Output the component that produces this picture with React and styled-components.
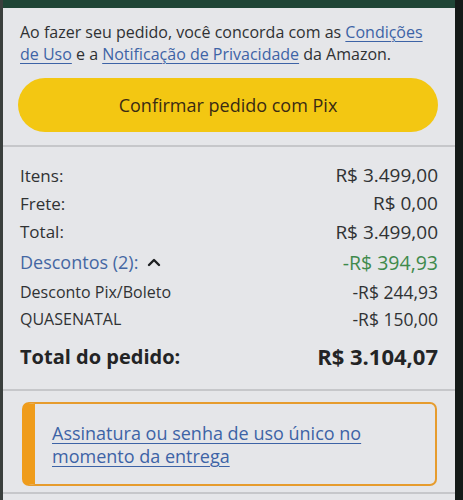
import React from "react";
import styled, { createGlobalStyle } from "styled-components";

const GlobalStyle = createGlobalStyle`
  html, body {
    margin: 0;
    padding: 0;
    background: #151c1a;
  }
  body {
    font-family: "Open Sans", "Liberation Sans", sans-serif;
    -webkit-font-smoothing: antialiased;
  }
`;

const Frame = styled.div`
  display: flex;
  width: 463px;
  height: 500px;
  overflow: hidden;
`;

const LeftBezel = styled.div`
  width: 3px;
  background: #3a3f3d;
`;

const RightBezel = styled.div`
  width: 8px;
  background: #141a18;
`;

const Screen = styled.div`
  flex: 1;
  display: flex;
  flex-direction: column;
  background: #e5e6e9;
`;

const TopBand = styled.div`
  height: 8px;
  background: #1f4536;
`;

const Notice = styled.p`
  margin: 0;
  padding: 13px 17px 0;
  font-size: 16px;
  line-height: 22px;
  color: #2f3133;
`;

const Link = styled.a`
  color: #3d63a6;
  text-decoration: underline;
  text-underline-offset: 3px;
  text-decoration-thickness: 1px;
`;

const ButtonWrap = styled.div`
  padding: 13px 17px 13px 15px;
`;

const PixButton = styled.button`
  width: 100%;
  height: 54px;
  border: none;
  border-radius: 27px;
  background: #f3c712;
  color: #3a2b12;
  font-family: inherit;
  font-size: 18px;
  cursor: pointer;
`;

const Divider = styled.div`
  height: 2px;
  background: #c6c7ca;
`;

const Summary = styled.div`
  display: flex;
  flex-direction: column;
  padding: 14px 17px 0;
`;

const Row = styled.div`
  display: flex;
  justify-content: space-between;
  align-items: center;
  height: ${(p) => p.$h || 28}px;
  font-size: ${(p) => p.$size || 17}px;
  color: #303234;
`;

const Label = styled.span`
  display: flex;
  align-items: center;
  gap: 9px;
  font-size: ${(p) => (p.$size ? `${p.$size}px` : "inherit")};
  color: ${(p) => p.$color || "inherit"};
`;

const Value = styled.span`
  font-size: ${(p) => p.$size || 19}px;
  color: ${(p) => p.$color || "inherit"};
`;

const TotalRow = styled.div`
  box-sizing: border-box;
  display: flex;
  justify-content: space-between;
  align-items: center;
  height: 58px;
  padding: 0 17px 8px;
  font-weight: 700;
  color: #232425;
`;

const TotalLabel = styled.span`
  font-size: 20px;
`;

const TotalValue = styled.span`
  font-size: 22px;
`;

const BoxWrap = styled.div`
  padding: 11px 18px 6px 19px;
`;

const DeliveryBox = styled.div`
  border: 2px solid #e69c2e;
  border-left: 13px solid #ef9c1b;
  border-radius: 7px;
  padding: 18px 20px 16px 17px;
  font-size: 18px;
  line-height: 23px;
`;

const Chevron = () => (
  <svg width="14" height="10" viewBox="0 0 14 10">
    <path d="M2 8 L7 3 L12 8" fill="none" stroke="#1d1f21" strokeWidth="2.4" strokeLinecap="round" strokeLinejoin="round" />
  </svg>
);

export default function App() {
  return (
    <Frame>
      <GlobalStyle />
      <LeftBezel />
      <Screen>
        <TopBand />
        <Notice>
          Ao fazer seu pedido, você concorda com as <Link href="#">Condições de Uso</Link> e a{" "}
          <Link href="#">Notificação de Privacidade</Link> da Amazon.
        </Notice>
        <ButtonWrap>
          <PixButton>Confirmar pedido com Pix</PixButton>
        </ButtonWrap>
        <Divider />
        <Summary>
          <Row>
            <Label>Itens:</Label>
            <Value>R$ 3.499,00</Value>
          </Row>
          <Row>
            <Label>Frete:</Label>
            <Value>R$ 0,00</Value>
          </Row>
          <Row $h={29}>
            <Label>Total:</Label>
            <Value>R$ 3.499,00</Value>
          </Row>
          <Row $h={32}>
            <Label $color="#4467a3" $size={18}>
              Descontos (2): <Chevron />
            </Label>
            <Value $color="#3f8a4c" $size={19.5}>-R$ 394,93</Value>
          </Row>
          <Row $h={28} $size={16}>
            <Label>Desconto Pix/Boleto</Label>
            <Value $size={17.5}>-R$ 244,93</Value>
          </Row>
          <Row $h={25} $size={16}>
            <Label>QUASENATAL</Label>
            <Value $size={17.5}>-R$ 150,00</Value>
          </Row>
        </Summary>
        <TotalRow>
          <TotalLabel>Total do pedido:</TotalLabel>
          <TotalValue>R$ 3.104,07</TotalValue>
        </TotalRow>
        <Divider />
        <BoxWrap>
          <DeliveryBox>
            <Link href="#">Assinatura ou senha de uso único no momento da entrega</Link>
          </DeliveryBox>
        </BoxWrap>
        <Divider />
      </Screen>
      <RightBezel />
    </Frame>
  );
}
